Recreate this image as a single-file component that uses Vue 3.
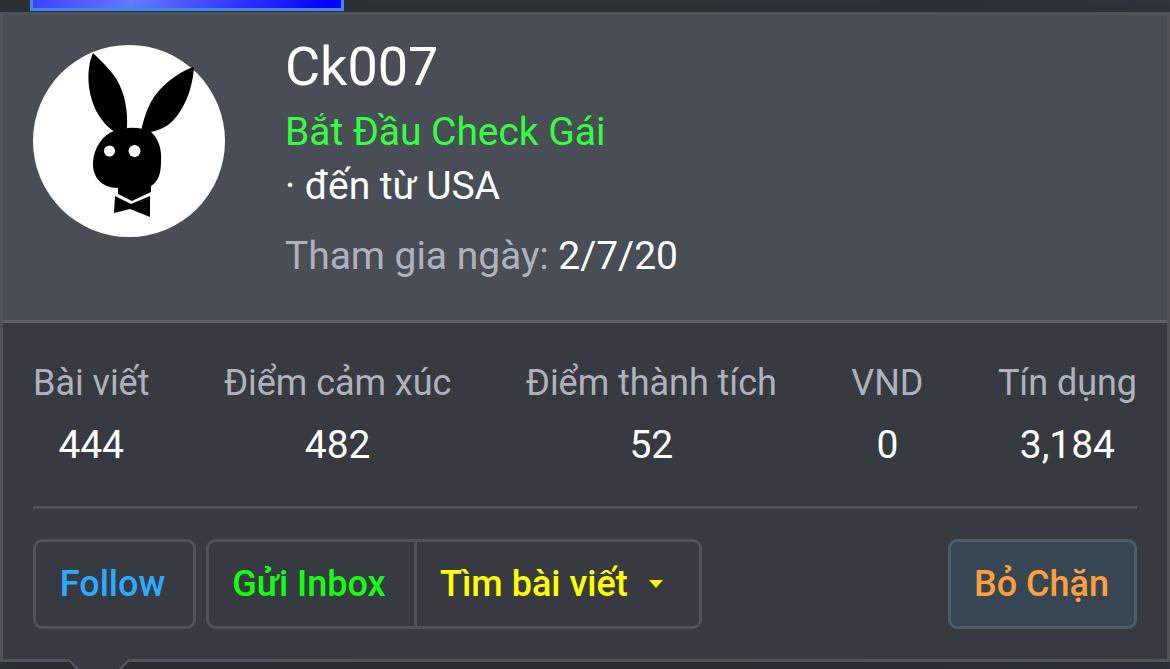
<script setup>
import { ref } from 'vue';

const member = {
  name: 'Ck007',
  title: 'Bắt Đầu Check Gái',
  location: '· đến từ USA',
  joinedLabel: 'Tham gia ngày:',
  joined: '2/7/20',
};

const stats = [
  { label: 'Bài viết', value: '444' },
  { label: 'Điểm cảm xúc', value: '482' },
  { label: 'Điểm thành tích', value: '52' },
  { label: 'VND', value: '0' },
  { label: 'Tín dụng', value: '3,184' },
];

const following = ref(false);

const toggleFollow = () => {
  following.value = !following.value;
};
</script>

<template>
  <div class="page">
    <div class="banner"></div>

    <section class="member-card">
      <header class="member-header">
        <svg class="avatar" viewBox="0 0 192 192">
          <circle cx="96" cy="96" r="96" fill="#fff" />
          <g fill="#000">
            <!-- ears -->
            <path d="M60 8C52 26 55 52 65 69C71 79 76 83 82 87L94 83C95 66 92 49 84 35C77 24 69 17 60 8Z" />
            <path d="M161 22C149 25 134 36 124 48C115 59 111 73 108 86L118 87C132 84 141 77 148 65C156 52 160 37 161 22Z" />
            <!-- head -->
            <path d="M81 86C91 82 107 81 118 87C126 94 129 105 128 117C128 129 125 137 118 141L118 147L99 156L85 149L85 143C68 143 59 131 60 117C61 102 70 90 81 86Z" />
            <!-- bow tie -->
            <path d="M82 151L98 159L117 151L117 172L97 164L81 168Z" />
          </g>
          <circle cx="76.500" cy="106" r="5.500" fill="#fff" />
          <circle cx="101.500" cy="106" r="6" fill="#fff" />
        </svg>

        <div class="member-info">
          <h4 class="member-name">{{ member.name }}</h4>
          <div class="member-title">{{ member.title }}</div>
          <div class="member-location">{{ member.location }}</div>
          <div class="member-joined">
            <span class="muted">{{ member.joinedLabel }}</span> {{ member.joined }}
          </div>
        </div>
      </header>

      <div class="member-body">
        <div class="stats">
          <dl v-for="stat in stats" :key="stat.label" class="stat">
            <dt>{{ stat.label }}</dt>
            <dd>{{ stat.value }}</dd>
          </dl>
        </div>

        <hr class="divider" />

        <div class="actions">
          <button class="btn follow" @click="toggleFollow">Follow</button>
          <div class="btn-group">
            <button class="btn inbox">Gửi Inbox</button>
            <button class="btn find">
              Tìm bài viết
              <svg class="caret" width="14" height="8" viewBox="0 0 14 8">
                <path d="M0 0H14L7 8Z" fill="currentColor" />
              </svg>
            </button>
          </div>
          <button class="btn block">Bỏ Chặn</button>
        </div>
      </div>

      <svg class="arrow" width="66" height="10" viewBox="0 0 66 10">
        <path d="M0 0H66L56 10H10Z" fill="#383a42" />
        <path d="M2 0L12 10M64 0L54 10" fill="none" stroke="#55585d" stroke-width="2" />
      </svg>
    </section>
  </div>
</template>

<style>
body {
  margin: 0;
  background: #2e3136;
}
</style>

<style scoped>
.page {
  box-sizing: border-box;
  width: 1170px;
  height: 669px;
  overflow: hidden;
  background: linear-gradient(90deg, #2d3234, #2c3137 70%, #2f333b);
  font-family: Roboto, "Liberation Sans", sans-serif;
  color: #fff;
}

.banner {
  box-sizing: border-box;
  width: 314px;
  height: 11px;
  margin: 0 0 1px 30px;
  border: 3px solid #428bf1;
  border-top: 0;
  background: linear-gradient(105deg, #3c42ff, #6878ff 32%, #0000ff 96%);
}

.member-card {
  position: relative;
  box-sizing: border-box;
  height: 650px;
  border: 3px solid #505358;
  background: #383a42;
  box-shadow: 0 5px 15px rgba(0, 0, 0, 0.1);
}

.member-header {
  box-sizing: border-box;
  display: flex;
  gap: 60px;
  height: 308px;
  padding: 30px;
  border-bottom: 3px solid #5f626a;
  background: #494d56;
}

.avatar {
  flex: none;
  width: 192px;
  height: 192px;
}

.member-info {
  font-size: 39px;
  line-height: 54px;
  letter-spacing: -0.05px;
  white-space: nowrap;
}

.member-name {
  margin: -11px 0 6px;
  font-size: 54px;
  font-weight: 400;
  line-height: 65px;
}

.member-title {
  color: #33ff40;
}

.member-joined {
  margin-top: 16px;
}

.muted {
  color: #afb2bd;
}

.member-body {
  padding: 30px;
}

.stats {
  display: flex;
  justify-content: space-between;
  height: 153px;
}

.stat {
  margin: 0;
  text-align: center;
  letter-spacing: -0.05px;
  white-space: nowrap;
}

.stat dt {
  padding-top: 5px;
  color: #afb2bd;
  font-size: 36px;
  line-height: 50px;
}

.stat dd {
  margin: 10px 0 0;
  font-size: 39px;
  line-height: 54px;
}

.divider {
  height: 3px;
  margin: 0 0 30px;
  border: 0;
  background: #505255;
}

.actions {
  display: flex;
  gap: 10px;
}

.btn {
  box-sizing: border-box;
  height: 90px;
  padding: 0 2px 0 0;
  border: 3px solid #505358;
  border-radius: 9px;
  background: transparent;
  font-family: inherit;
  font-size: 36px;
  font-weight: 500;
  white-space: nowrap;
  cursor: pointer;
}

.btn-group {
  display: flex;
}

.follow {
  width: 163px;
  padding-right: 4px;
  color: #2aabff;
}

.inbox {
  width: 211px;
  padding-right: 5px;
  border-radius: 9px 0 0 9px;
  color: #12ff12;
}

.find {
  display: flex;
  align-items: center;
  width: 288px;
  margin-left: -3px;
  padding-left: 23px;
  border-radius: 0 9px 9px 0;
  color: #ffff00;
}

.caret {
  margin-left: 21px;
}

.block {
  width: 189px;
  margin-left: auto;
  border-color: #4d5f6c;
  background: #364753;
  color: #ff9f3c;
}

/* pointer that sits over the card's bottom border */
.arrow {
  position: absolute;
  bottom: -10px;
  left: 63px;
}
</style>
